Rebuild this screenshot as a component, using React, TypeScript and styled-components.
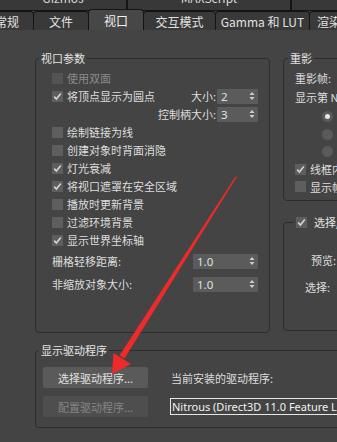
import styled, { createGlobalStyle } from "styled-components";

const GlobalStyle = createGlobalStyle`
  html, body {
    margin: 0;
    padding: 0;
    background: #444444;
  }
  body {
    font-family: "Noto Sans CJK SC", "Noto Sans", sans-serif;
    color: #dedede;
  }
`;

const Page = styled.div`
  position: relative;
  width: 337px;
  height: 442px;
  overflow: hidden;
  background: #444444;
`;

const TopTabs = styled.div`
  display: flex;
  height: 11px;
  background: #383838;
  border-bottom: 1px solid #141414;
  box-sizing: border-box;
`;

const TopTab = styled.div<{ $w: number }>`
  flex: 0 0 ${(p) => p.$w}px;
  display: flex;
  align-items: flex-start;
  justify-content: center;
  overflow: hidden;
  border-right: 2px solid #141414;
  font-size: 12px;
  line-height: 12px;
  color: #d8d8d8;
  span {
    margin-top: -8px;
  }
`;

const TabRow = styled.div`
  display: flex;
  height: 19px;
  margin-left: -20px;
  border-bottom: 1px solid #1a1a1a;
  box-sizing: border-box;
`;

const Tab = styled.div<{ $w: number; $active?: boolean }>`
  flex: 0 0 ${(p) => p.$w}px;
  display: flex;
  align-items: center;
  justify-content: center;
  box-sizing: border-box;
  font-size: 12px;
  color: ${(p) => (p.$active ? "#f0f0f0" : "#e2e2e2")};
  background: ${(p) => (p.$active ? "#474747" : "#393939")};
  border: 1.5px solid #141414;
  border-bottom: none;
  border-radius: 4px 4px 0 0;
  margin-right: -1px;
  margin-top: ${(p) => (p.$active ? "-2px" : "0")};
  height: ${(p) => (p.$active ? "21px" : "19px")};
  white-space: nowrap;
`;

const Content = styled.div`
  padding: 22px 0 0 35px;
`;

const TopArea = styled.div`
  display: flex;
  gap: 13px;
`;

const Group = styled.fieldset<{ $w: number; $h: number }>`
  margin: 0;
  padding: 0;
  min-width: 0;
  box-sizing: border-box;
  width: ${(p) => p.$w}px;
  height: ${(p) => p.$h}px;
  flex: 0 0 auto;
  border: 1px solid #2c2c2c;
  border-radius: 4px;
`;

const Legend = styled.legend<{ $ml?: number }>`
  margin-left: ${(p) => p.$ml ?? 3}px;
  padding: 0 2px;
  font-size: 11px;
  line-height: 13px;
  color: #e4e4e4;
  display: flex;
  align-items: center;
  gap: 3px;
`;

const RightCol = styled.div`
  display: flex;
  flex-direction: column;
  gap: 15px;
`;

const LeftBody = styled.div`
  padding: 4px 11px 0 16px;
  display: flex;
  flex-direction: column;
`;

const Row = styled.div<{ $h?: number; $mt?: number; $pl?: number }>`
  height: ${(p) => p.$h ?? 18}px;
  margin-top: ${(p) => p.$mt ?? 0}px;
  padding-left: ${(p) => p.$pl ?? 0}px;
  display: flex;
  align-items: center;
  font-size: 11px;
  white-space: nowrap;
`;

const RightPart = styled.div`
  margin-left: auto;
  display: flex;
  align-items: center;
  gap: 1px;
`;

const Label = styled.span<{ $disabled?: boolean }>`
  font-size: 11px;
  color: ${(p) => (p.$disabled ? "#8b8b8b" : "#dedede")};
  white-space: nowrap;
`;

const BoxWrap = styled.span<{ $disabled?: boolean }>`
  width: 11px;
  height: 11px;
  flex: 0 0 11px;
  margin-right: 4px;
  background: ${(p) => (p.$disabled ? "#545454" : "#5e5e5e")};
  display: inline-flex;
  align-items: center;
  justify-content: center;
`;

function Check({ on, disabled }: { on?: boolean; disabled?: boolean }) {
  return (
    <BoxWrap $disabled={disabled}>
      {on && (
        <svg width="9" height="9" viewBox="0 0 9 9">
          <path d="M1.2 4.6 L3.4 7 L7.8 1.6" fill="none" stroke="#d4d4d4" strokeWidth="1.6" />
        </svg>
      )}
    </BoxWrap>
  );
}

const SpinBox = styled.div<{ $w: number }>`
  width: ${(p) => p.$w}px;
  height: 15px;
  box-sizing: border-box;
  background: #5b5b5b;
  border-radius: 1px;
  display: flex;
  align-items: center;
  padding: 0 3px 0 4px;
  font-size: 11.5px;
  font-family: "Noto Sans", sans-serif;
  color: #e0e0e0;
  span {
    flex: 1;
  }
`;

function Spinner({ value, w }: { value: string; w: number }) {
  return (
    <SpinBox $w={w}>
      <span>{value}</span>
      <svg width="6" height="10" viewBox="0 0 6 10">
        <path d="M0.5 4 L3 1 L5.5 4 Z" fill="#cfcfcf" />
        <path d="M0.5 6 L3 9 L5.5 6 Z" fill="#cfcfcf" />
      </svg>
    </SpinBox>
  );
}

const RightBody = styled.div`
  padding: 4px 0 0 11px;
  display: flex;
  flex-direction: column;
`;

const Radio = styled.span<{ $on?: boolean }>`
  width: 11px;
  height: 11px;
  border-radius: 50%;
  margin-left: 27px;
  margin-right: 6px;
  background: #5a5a5a;
  flex: 0 0 11px;
  display: flex;
  align-items: center;
  justify-content: center;
  &::after {
    content: "";
    display: ${(p) => (p.$on ? "block" : "none")};
    width: 5px;
    height: 5px;
    border-radius: 50%;
    background: #e6e6e6;
  }
`;

const BottomGroup = styled(Group)`
  margin-top: 11px;
  width: 320px;
`;

const DriverGrid = styled.div`
  display: grid;
  grid-template-columns: 105px 1fr;
  column-gap: 23px;
  row-gap: 8px;
  padding: 10px 0 0 7px;
  align-items: center;
`;

const Button = styled.div<{ $disabled?: boolean }>`
  height: 21px;
  border-radius: 2px;
  background: ${(p) => (p.$disabled ? "#4e4e4e" : "#5a5a5a")};
  color: ${(p) => (p.$disabled ? "#858585" : "#e0e0e0")};
  font-size: 11px;
  display: flex;
  align-items: center;
  justify-content: center;
`;

const DriverBox = styled.div`
  height: 17px;
  margin-left: -1px;
  box-sizing: border-box;
  border: 1px solid #e6e6e6;
  border-right: none;
  display: flex;
  align-items: center;
  padding-left: 1px;
  font-family: "Noto Sans", sans-serif;
  font-size: 11px;
  color: #f2f2f2;
  white-space: nowrap;
  overflow: hidden;
`;

const ArrowLayer = styled.svg`
  position: absolute;
  left: 0;
  top: 0;
  pointer-events: none;
`;

const checks: { text: string; on?: boolean }[] = [
  { text: "绘制链接为线" },
  { text: "创建对象时背面消隐" },
  { text: "灯光衰减", on: true },
  { text: "将视口遮罩在安全区域", on: true },
  { text: "播放时更新背景" },
  { text: "过滤环境背景" },
  { text: "显示世界坐标轴", on: true },
];

export default function App() {
  return (
    <Page>
      <GlobalStyle />
      <TopTabs>
        <TopTab $w={126}>
          <span>Gizmos</span>
        </TopTab>
        <TopTab $w={162}>
          <span>MAXScript</span>
        </TopTab>
        <TopTab $w={80} />
      </TopTabs>
      <TabRow>
        <Tab $w={54}>常规</Tab>
        <Tab $w={56}>文件</Tab>
        <Tab $w={56} $active>
          视口
        </Tab>
        <Tab $w={73}>交互模式</Tab>
        <Tab $w={95}>Gamma 和 LUT</Tab>
        <Tab $w={40}>渲染</Tab>
      </TabRow>

      <Content>
        <TopArea>
          <Group $w={235} $h={281}>
            <Legend>视口参数</Legend>
            <LeftBody>
              <Row>
                <Check disabled />
                <Label $disabled>使用双面</Label>
              </Row>
              <Row>
                <Check on />
                <Label>将顶点显示为圆点</Label>
                <RightPart>
                  <Label>大小:</Label>
                  <Spinner value="2" w={41} />
                </RightPart>
              </Row>
              <Row>
                <RightPart>
                  <Label>控制柄大小:</Label>
                  <Spinner value="3" w={41} />
                </RightPart>
              </Row>
              {checks.map((c) => (
                <Row key={c.text}>
                  <Check on={c.on} />
                  <Label>{c.text}</Label>
                </Row>
              ))}
              <Row $h={16} $mt={4}>
                <Label>栅格轻移距离:</Label>
                <RightPart>
                  <Spinner value="1.0" w={65} />
                </RightPart>
              </Row>
              <Row $h={16} $mt={7}>
                <Label>非缩放对象大小:</Label>
                <RightPart>
                  <Spinner value="1.0" w={65} />
                </RightPart>
              </Row>
            </LeftBody>
          </Group>

          <RightCol>
            <Group $w={130} $h={149}>
              <Legend $ml={4}>重影</Legend>
              <RightBody>
                <Row $h={18}>
                  <Label>重影帧:</Label>
                </Row>
                <Row $h={20}>
                  <Label>显示第 N 帧:</Label>
                </Row>
                <Row $h={19}>
                  <Radio $on />
                  <Label>仅重影</Label>
                </Row>
                <Row $h={17}>
                  <Radio />
                  <Label>之前</Label>
                </Row>
                <Row $h={17}>
                  <Radio />
                  <Label>之后</Label>
                </Row>
                <Row $h={18}>
                  <Check on />
                  <Label>线框内显示重影</Label>
                </Row>
                <Row $h={17}>
                  <Check />
                  <Label>显示帧编号</Label>
                </Row>
              </RightBody>
            </Group>
            <Group $w={130} $h={115}>
              <Legend $ml={10}>
                <Check on />
                选择/预览亮显
              </Legend>
              <RightBody>
                <Row $h={18} $mt={18} $pl={16}>
                  <Label>预览:</Label>
                </Row>
                <Row $h={18} $mt={9} $pl={10}>
                  <Label>选择:</Label>
                </Row>
              </RightBody>
            </Group>
          </RightCol>
        </TopArea>

        <BottomGroup $w={320} $h={84}>
          <Legend>显示驱动程序</Legend>
          <DriverGrid>
            <Button>选择驱动程序...</Button>
            <Label>当前安装的驱动程序:</Label>
            <Button $disabled>配置驱动程序...</Button>
            <DriverBox>Nitrous (Direct3D 11.0 Feature Level 11.0)</DriverBox>
          </DriverGrid>
        </BottomGroup>
      </Content>

      <ArrowLayer width="337" height="442" viewBox="0 0 337 442">
        <polygon points="235.5,176.5 236.5,177.2 124.5,358.5 119.5,355.5" fill="#ee2a2a" />
        <polygon points="112,374 113.5,353 131,364" fill="#ee2a2a" />
      </ArrowLayer>
    </Page>
  );
}
